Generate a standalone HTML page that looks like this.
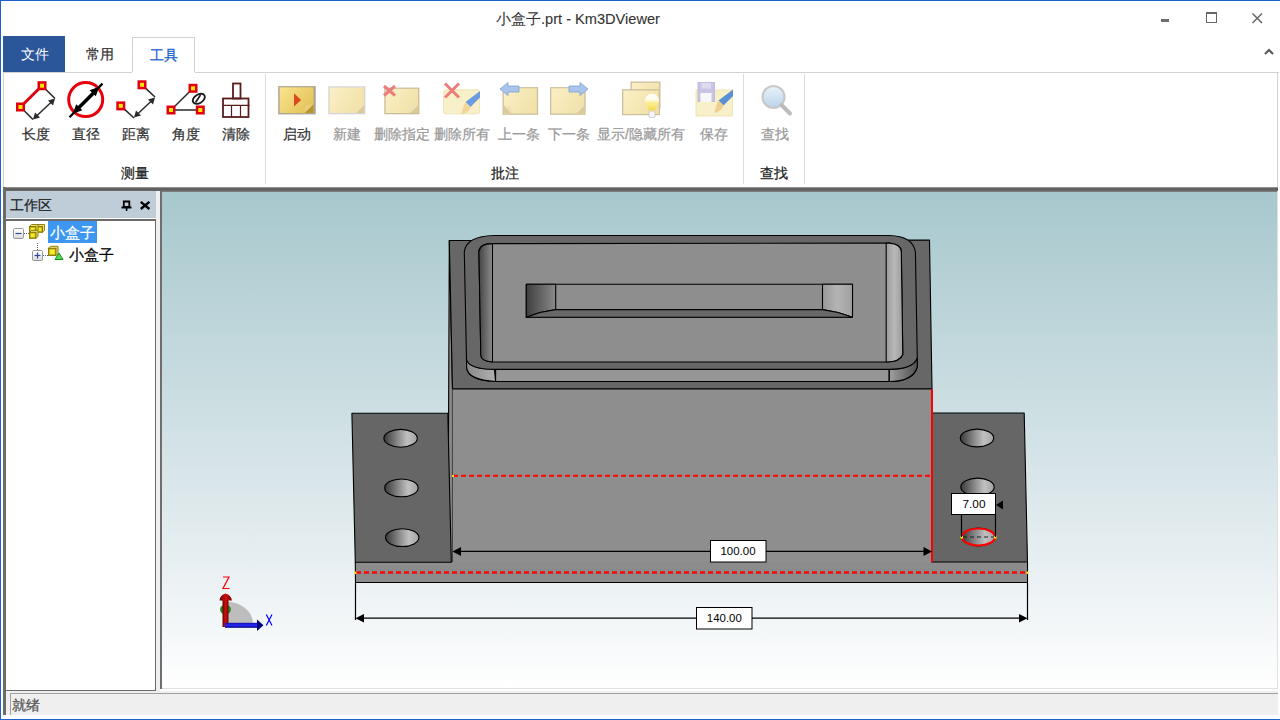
<!DOCTYPE html>
<html><head><meta charset="utf-8">
<style>
*{margin:0;padding:0;box-sizing:border-box}
html,body{width:1280px;height:720px;overflow:hidden;background:#fff;font-family:"Liberation Sans",sans-serif;}
div{-webkit-text-stroke:0.25px currentColor}
.a{position:absolute}
#frame{left:0;top:0;width:1280px;height:720px;border:1px solid #1c5fd0;border-right:none}
.title{left:0;top:10px;width:1156px;text-align:center;font-size:14.6px;color:#333;-webkit-text-stroke:0.1px #333}
.tab{top:37px;height:35px;font-size:14px;line-height:35px;text-align:center}
.lbl{font-size:14px;color:#333;text-align:center;white-space:nowrap}
.dis{color:#9a9a9a}
.grp{font-size:14px;color:#222;text-align:center;top:164.5px}
.sep{width:1px;background:#dcdcdc;top:74px;height:110px}
</style></head>
<body>
<div class="a" id="frame"></div>
<div class="a title">小盒子.prt - Km3DViewer</div>
<!-- window buttons -->
<div class="a" style="left:1161px;top:19px;width:8px;height:3px;background:#6e6e6e"></div>
<div class="a" style="left:1206px;top:12px;width:11px;height:11px;border:1px solid #666;border-top-width:2px"></div>
<svg class="a" style="left:1251px;top:12px" width="13" height="13"><path d="M1.5 1.5L11 11M11 1.5L1.5 11" stroke="#666" stroke-width="1.5"/></svg>
<svg class="a" style="left:1263px;top:48px" width="12" height="8"><path d="M2 6L6 2L10 6" stroke="#555" stroke-width="2" fill="none"/></svg>

<!-- tabs -->
<div class="a tab" style="left:3px;top:36px;height:36px;line-height:38px;width:62px;padding-left:2px;background:#2b579a;color:#fff;-webkit-text-stroke:0;font-size:13.6px">文件</div>
<div class="a tab" style="left:68px;width:64px;color:#333">常用</div>
<div class="a tab" style="left:132px;width:63px;border:1px solid #d2d2d2;border-bottom:none;background:#fff;color:#1a62d0">工具</div>
<div class="a" style="left:3px;top:72px;width:129px;height:1px;background:#d2d2d2"></div>
<div class="a" style="left:3px;top:72px;width:1px;height:115px;background:#d2d2d2"></div>
<div class="a" style="left:195px;top:72px;width:1084px;height:1px;background:#d2d2d2"></div>

<!-- ribbon content -->
<div id="ribbon">
<svg class="a" style="left:0;top:72px" width="820" height="80" viewBox="0 72 820 80">
<defs>
<linearGradient id="note" x1="0" y1="0" x2="1" y2="1"><stop offset="0" stop-color="#f6e7a6"/><stop offset="1" stop-color="#e6cf7a"/></linearGradient>
<linearGradient id="noteA" x1="0" y1="0" x2="1" y2="0.6"><stop offset="0" stop-color="#fbe490"/><stop offset="1" stop-color="#e4c55a"/></linearGradient>
<linearGradient id="bulb" x1="0" y1="0" x2="0" y2="1"><stop offset="0" stop-color="#ffffff"/><stop offset="0.35" stop-color="#fffbe8"/><stop offset="0.55" stop-color="#fbee90"/><stop offset="1" stop-color="#f3dc50"/></linearGradient>
<linearGradient id="noteD" x1="0" y1="0" x2="1" y2="0.5"><stop offset="0" stop-color="#fbf0c6"/><stop offset="1" stop-color="#f2e2aa"/></linearGradient>
<linearGradient id="mag" x1="0" y1="0" x2="0" y2="1"><stop offset="0" stop-color="#eaf3fb"/><stop offset="1" stop-color="#b9d3ea"/></linearGradient>
</defs>
<!-- 长度 -->
<g stroke-linecap="butt">
<line x1="20.5" y1="107" x2="42" y2="85.7" stroke="#e00010" stroke-width="3"/>
<path d="M42,85.7 L55,98.5 M20.5,107 L33,119.5" stroke="#2a2a2a" stroke-width="1.6" fill="none"/>
<line x1="35" y1="117.5" x2="53.5" y2="100" stroke="#2a2a2a" stroke-width="1.5"/>
<polygon points="55,98.5 48,100.5 53,105.5" fill="#2a2a2a"/>
<polygon points="33,119.5 35,112.5 40,117.5" fill="#2a2a2a"/>
<rect x="16" y="102.5" width="9" height="9" fill="#e00010"/><rect x="18.5" y="105" width="4" height="4" fill="#ffe800"/>
<rect x="37.5" y="81.2" width="9" height="9" fill="#e00010"/><rect x="40" y="83.7" width="4" height="4" fill="#ffe800"/>
</g>
<!-- 直径 -->
<circle cx="85.7" cy="99.6" r="17" fill="none" stroke="#e8000c" stroke-width="3"/>
<line x1="69.5" y1="117.3" x2="102.5" y2="83.6" stroke="#000" stroke-width="2.3"/>
<line x1="76" y1="110.5" x2="96" y2="90.5" stroke="#000" stroke-width="3.6"/>
<polygon points="98,88 91,90.5 95.5,95" fill="#000" stroke="#000" stroke-width="1.5"/>
<polygon points="74,112.5 76.5,105.5 81,110" fill="#000" stroke="#000" stroke-width="1.5"/>
<!-- 距离 -->
<path d="M142,84.8 L155,97 M120.8,105.9 L134,118" stroke="#2a2a2a" stroke-width="1.6" fill="none"/>
<line x1="135.5" y1="116" x2="153.5" y2="99" stroke="#2a2a2a" stroke-width="1.5"/>
<polygon points="155,97.5 148,99.5 153,104.5" fill="#2a2a2a"/>
<polygon points="134,117.5 136,110.5 141,115.5" fill="#2a2a2a"/>
<rect x="116.3" y="101.4" width="9" height="9" fill="#e00010"/><rect x="118.8" y="103.9" width="4" height="4" fill="#ffe800"/>
<rect x="137.5" y="80.3" width="9" height="9" fill="#e00010"/><rect x="140" y="82.8" width="4" height="4" fill="#ffe800"/>
<!-- 角度 -->
<path d="M171,110 L193,88.3 M171,110 L200.3,110" stroke="#2a2a2a" stroke-width="1.5" fill="none"/>
<ellipse cx="198.8" cy="98.8" rx="6.6" ry="4.3" transform="rotate(-32 198.8 98.8)" stroke="#1a1a1a" stroke-width="1.8" fill="none"/>
<path d="M195.5,102.5 L200.5,95" stroke="#1a1a1a" stroke-width="1.6"/>
<rect x="166.5" y="105.5" width="9" height="9" fill="#e00010"/><rect x="169" y="108" width="4" height="4" fill="#ffe800"/>
<rect x="188.5" y="83.8" width="9" height="9" fill="#e00010"/><rect x="191" y="86.3" width="4" height="4" fill="#ffe800"/>
<rect x="195.8" y="105.5" width="9" height="9" fill="#e00010"/><rect x="198.3" y="108" width="4" height="4" fill="#ffe800"/>
<!-- 清除 -->
<g fill="none" stroke="#5a1c1c" stroke-width="1.8">
<rect x="233" y="83.5" width="7.5" height="15"/>
<rect x="223" y="98.5" width="25.5" height="18.5"/>
<path d="M223,105.3 H249.5 M231.5,105.3 V117 M240.5,105.3 V117" stroke-width="1.2"/>
</g>
<!-- 启动 -->
<rect x="278.2" y="86.1" width="37.5" height="28.3" fill="#a8a294"/>
<rect x="279.6" y="87.3" width="34" height="25.8" fill="url(#noteA)"/>
<polygon points="313.6,104 313.6,113.1 304.5,113.1" fill="#b8962e"/>
<polygon points="304.5,113.1 313.6,104 306,105.5" fill="#e6cf82"/>
<polygon points="294,93.3 301.2,100 294,106.6" fill="#dc4a22"/>
<!-- 新建 -->
<rect x="328.3" y="86.3" width="37.1" height="28.0" fill="#d4d2d6"/>
<rect x="329.6" y="87.5" width="34.5" height="25.5" fill="url(#noteD)"/>
<polygon points="364.1,105.0 364.1,113.0 356.1,113.0" fill="#dccb94"/><polygon points="356.1,113.0 364.1,105.0 357.1,106.0" fill="#efe2b8"/>
<!-- 删除指定 -->
<rect x="384.3" y="87.6" width="35.1" height="26.7" fill="#c9bc9a"/>
<rect x="385.6" y="88.8" width="32.5" height="24.2" fill="url(#noteD)"/>
<polygon points="418.1,105.0 418.1,113.0 410.1,113.0" fill="#dccb94"/><polygon points="410.1,113.0 418.1,105.0 411.1,106.0" fill="#efe2b8"/>
<path d="M384,86 L395,95.5 M395,86 L384,95.5" stroke="#ec7d7d" stroke-width="3"/>
<!-- 删除所有 -->
<rect x="443.6" y="89.8" width="36" height="24" rx="2" fill="#f8f0c8" stroke="#ebdfa8" stroke-width="0.8"/>
<path d="M445,83.5 L459,97.5 M459,83.5 L445,97.5" stroke="#ea7e7e" stroke-width="3"/>
<path d="M480,91 L480,97.5 L470.5,107 L465.5,102 Z" fill="#6b9be0"/>
<path d="M465.5,102 L470.5,107 Q469,112.5 461.5,114.5 Q463,106.5 465.5,102 Z" fill="#f3d49a"/>
<!-- 上一条 -->
<rect x="502.5" y="87.1" width="35.6" height="27.7" fill="#cdbf9c"/>
<rect x="503.8" y="88.3" width="33" height="25.2" fill="url(#noteD)"/>
<polygon points="503.8,105.5 503.8,113.5 511.8,113.5" fill="#dccb94"/><polygon points="511.8,113.5 503.8,105.5 510.8,106.5" fill="#efe2b8"/>
<path d="M500,89 L508,82.5 L508,86 L519,86 L519,92 L508,92 L508,95.5 Z" fill="#a9c5ec" stroke="#7ea0d4" stroke-width="0.8"/>
<!-- 下一条 -->
<rect x="550.0" y="87.1" width="35.6" height="27.7" fill="#cdbf9c"/>
<rect x="551.3" y="88.3" width="33" height="25.2" fill="url(#noteD)"/>
<polygon points="584.3,105.5 584.3,113.5 576.3,113.5" fill="#dccb94"/><polygon points="576.3,113.5 584.3,105.5 577.3,106.5" fill="#efe2b8"/>
<path d="M588,89 L580,82.5 L580,86 L569,86 L569,92 L580,92 L580,95.5 Z" fill="#a9c5ec" stroke="#7ea0d4" stroke-width="0.8"/>
<!-- 显示/隐藏所有 -->
<rect x="630.5" y="81.5" width="30" height="27" fill="#cdbf9c"/>
<rect x="631.8" y="82.8" width="27.4" height="24.5" fill="url(#noteD)"/>
<rect x="622" y="89.2" width="38" height="26" fill="#cdbf9c"/>
<rect x="623.3" y="90.5" width="35.4" height="23.5" fill="url(#noteD)"/>
<rect x="649" y="111" width="6" height="6.5" rx="1" fill="#f4f4f4" stroke="#b8b8b8" stroke-width="0.6"/>
<path d="M644.8,101 A7.2,7.2 0 1 1 659.2,101 Q658.5,105 656,107.5 L655.5,110.5 H648.5 L648,107.5 Q645.5,105 644.8,101 Z" fill="url(#bulb)"/>
<!-- 保存 -->
<rect x="696" y="90" width="36.5" height="26" fill="#f8f0c8" stroke="#ebdfa8" stroke-width="0.8"/>
<rect x="698" y="82.5" width="16.5" height="19" fill="#c9c4e4" stroke="#b8b2dc" stroke-width="0.8"/>
<rect x="701.5" y="83" width="9.5" height="5.5" fill="#dedbee"/>
<rect x="700.5" y="93" width="11" height="9" fill="#f8f8fa"/>
<path d="M733,89.5 L733,96 L723.5,105.5 L718.5,100.5 Z" fill="#5b8fd6"/>
<path d="M718.5,100.5 L723.5,105.5 Q722,111 714.5,113 Q716,105 718.5,100.5 Z" fill="#f0cf8e"/>
<!-- 查找 -->
<circle cx="773.5" cy="97" r="11" fill="url(#mag)" stroke="#c8c8c8" stroke-width="2.2"/>
<line x1="781.5" y1="105" x2="790" y2="113.5" stroke="#bcbcbc" stroke-width="4" stroke-linecap="round"/>
</svg>
<div class="a lbl" style="left:11px;top:126px;width:50px">长度</div>
<div class="a lbl" style="left:61px;top:126px;width:50px">直径</div>
<div class="a lbl" style="left:111px;top:126px;width:50px">距离</div>
<div class="a lbl" style="left:161px;top:126px;width:50px">角度</div>
<div class="a lbl" style="left:211px;top:126px;width:50px">清除</div>
<div class="a lbl" style="left:272px;top:126px;width:50px">启动</div>
<div class="a lbl dis" style="left:322px;top:126px;width:50px">新建</div>
<div class="a lbl dis" style="left:372px;top:126px;width:60px">删除指定</div>
<div class="a lbl dis" style="left:432px;top:126px;width:60px">删除所有</div>
<div class="a lbl dis" style="left:494px;top:126px;width:50px">上一条</div>
<div class="a lbl dis" style="left:544px;top:126px;width:50px">下一条</div>
<div class="a lbl dis" style="left:596px;top:126px;width:90px">显示/隐藏所有</div>
<div class="a lbl dis" style="left:689px;top:126px;width:50px">保存</div>
<div class="a lbl dis" style="left:750px;top:126px;width:50px">查找</div>
<div class="a grp" style="left:110px;width:50px">测量</div>
<div class="a grp" style="left:480px;width:50px">批注</div>
<div class="a grp" style="left:749px;width:50px">查找</div>
<div class="a sep" style="left:265px"></div>
<div class="a sep" style="left:743px"></div>
<div class="a sep" style="left:804px"></div>
</div>

<!-- dark bar -->
<div class="a" style="left:3px;top:187px;width:1275px;height:5px;background:linear-gradient(#a8a8a8,#626262 30%,#5e5e5e 55%,#707070 80%,#8a8a8a)"></div>
<div class="a" style="left:1277px;top:72px;width:1px;height:115px;background:#d2d2d2"></div>
<div class="a" style="left:3px;top:187px;width:3px;height:528px;background:#6b6b6b"></div>

<!-- left panel -->
<div class="a" style="left:6px;top:191px;width:150px;height:500px;background:#6b6b6b"></div>
<div class="a" style="left:6px;top:191px;width:150px;height:27px;background:#bfcdd9"></div>
<div class="a" style="left:6px;top:218px;width:150px;height:1px;background:#fff"></div>
<div class="a" style="left:6px;top:221px;width:149px;height:469px;background:#fff"></div>
<div class="a" style="left:10px;top:197px;font-size:14px;color:#222">工作区</div>
<div class="a" style="left:156px;top:191px;width:4px;height:500px;background:#efefef"></div>
<div class="a" style="left:160px;top:191px;width:2px;height:498px;background:#6e6e6e"></div>

<!-- TREE -->
<svg class="a" style="left:0;top:190px" width="160" height="80" viewBox="0 190 160 80">
<defs>
<linearGradient id="tb" x1="0" y1="0" x2="0" y2="1"><stop offset="0" stop-color="#fff"/><stop offset="0.5" stop-color="#f2f2f2"/><stop offset="1" stop-color="#d6d6d6"/></linearGradient>
</defs>
<!-- pin -->
<path d="M123.8,201.5 H129.3 V207 H123.8 Z" fill="none" stroke="#000" stroke-width="1.8"/>
<rect x="121.5" y="206.5" width="10" height="2" fill="#000"/>
<rect x="125.8" y="208" width="1.6" height="3" fill="#000"/>
<path d="M140.8,201.8 L149.4,209 M149.4,201.8 L140.8,209" stroke="#000" stroke-width="2.4"/>
<!-- minus box -->
<rect x="13.5" y="228.5" width="10" height="10" rx="1.2" fill="url(#tb)" stroke="#9a9a9a" stroke-width="1"/>
<line x1="15.5" y1="233.5" x2="21.5" y2="233.5" stroke="#2b4a9a" stroke-width="1.2"/>
<line x1="24" y1="233.5" x2="29" y2="233.5" stroke="#666" stroke-width="1" stroke-dasharray="1,1"/>
<line x1="37.5" y1="243" x2="37.5" y2="250" stroke="#666" stroke-width="1" stroke-dasharray="1,1"/>
<!-- cubes icon -->
<g><path d="M36,226.5 L38,224.5 H44.5 V230.3 L42.5,232.3 Z" fill="#e9e07a" stroke="#857400" stroke-width="0.9"/><rect x="36" y="226.5" width="6.5" height="5.8" fill="#b8a800" stroke="#857400" stroke-width="0.9"/><rect x="37.2" y="227.7" width="4.1" height="3.4" fill="#f5ec30"/><path d="M29.5,226.5 L31.5,224.5 H38.0 V230.3 L36.0,232.3 Z" fill="#e9e07a" stroke="#857400" stroke-width="0.9"/><rect x="29.5" y="226.5" width="6.5" height="5.8" fill="#b8a800" stroke="#857400" stroke-width="0.9"/><rect x="30.7" y="227.7" width="4.1" height="3.4" fill="#f5ec30"/><path d="M29.5,232.3 L31.5,230.3 H38.0 V236.3 L36.0,238.3 Z" fill="#e9e07a" stroke="#857400" stroke-width="0.9"/><rect x="29.5" y="232.3" width="6.5" height="6" fill="#b8a800" stroke="#857400" stroke-width="0.9"/><rect x="30.7" y="233.5" width="4.1" height="3.6" fill="#f5ec30"/></g>
<!-- plus box -->
<rect x="32.5" y="250.5" width="10" height="10" rx="1.2" fill="url(#tb)" stroke="#9a9a9a" stroke-width="1"/>
<line x1="34.5" y1="255.5" x2="40.5" y2="255.5" stroke="#2b4a9a" stroke-width="1.2"/>
<line x1="37.5" y1="252.5" x2="37.5" y2="258.5" stroke="#2b4a9a" stroke-width="1.2"/>
<line x1="43" y1="255.5" x2="48" y2="255.5" stroke="#666" stroke-width="1" stroke-dasharray="1,1"/>
<g><path d="M48.5,248.3 L50.5,246.3 H58.0 V253.5 L56.0,255.5 Z" fill="#e9e07a" stroke="#857400" stroke-width="0.9"/><rect x="48.5" y="248.3" width="7.5" height="7.2" fill="#b8a800" stroke="#857400" stroke-width="0.9"/><rect x="49.7" y="249.5" width="5.1" height="4.800000000000001" fill="#f5ec30"/></g>
<polygon points="59,253 63,259.5 55,259.5" fill="#4ee04e" stroke="#1a8a1a" stroke-width="1"/>
</svg>
<div class="a" style="left:48px;top:221px;width:49px;height:22px;background:#3d96ef"></div>
<div class="a" style="left:49.5px;top:223px;font-size:15px;line-height:20px;color:#fff">小盒子</div>
<div class="a" style="left:69px;top:245px;font-size:15px;line-height:20px;color:#000">小盒子</div>
<!-- /TREE -->
<!-- viewer -->
<div class="a" style="left:162px;top:192px;width:1115px;height:496px;background:linear-gradient(#a7c8cd,#e8eff2 75%,#fff)"></div>
<div class="a" style="left:162px;top:688px;width:1116px;height:1px;background:#e0e0e0"></div>
<div class="a" style="left:1277px;top:191px;width:1px;height:498px;background:#e0e0e0"></div>

<!-- MODEL -->
<svg class="a" style="left:0;top:0" width="1280" height="720" viewBox="0 0 1280 720">
<defs>
<linearGradient id="hole" x1="0" x2="1" y1="0" y2="0"><stop offset="0" stop-color="#3a3a3a"/><stop offset="0.7" stop-color="#c0c0c0"/><stop offset="1" stop-color="#a4a4a4"/></linearGradient>
<linearGradient id="wallL" x1="0" x2="1"><stop offset="0" stop-color="#3e3e3e"/><stop offset="1" stop-color="#8a8a8a"/></linearGradient>
<linearGradient id="wallR" x1="0" x2="1"><stop offset="0" stop-color="#999"/><stop offset="0.5" stop-color="#b4b4b4"/><stop offset="1" stop-color="#a0a0a0"/></linearGradient>
<linearGradient id="rimL" x1="0" x2="1"><stop offset="0" stop-color="#8a8a8a"/><stop offset="1" stop-color="#b0b0b0"/></linearGradient>
<linearGradient id="rimR" x1="0" x2="1"><stop offset="0" stop-color="#a0a0a0"/><stop offset="1" stop-color="#505050"/></linearGradient>
<linearGradient id="ringWL" x1="0" x2="1"><stop offset="0" stop-color="#444"/><stop offset="1" stop-color="#8c8c8c"/></linearGradient>
<linearGradient id="ringWR" x1="0" x2="1"><stop offset="0" stop-color="#9a9a9a"/><stop offset="0.5" stop-color="#b8b8b8"/><stop offset="1" stop-color="#9a9a9a"/></linearGradient>
<linearGradient id="arrR" x1="0" x2="1"><stop offset="0" stop-color="#600"/><stop offset="0.5" stop-color="#d01010"/><stop offset="1" stop-color="#700"/></linearGradient>
<linearGradient id="arrB" x1="0" x2="0" y1="0" y2="1"><stop offset="0" stop-color="#1010a0"/><stop offset="0.5" stop-color="#2a2aff"/><stop offset="1" stop-color="#000080"/></linearGradient>
</defs>
<g stroke="#000" stroke-width="1.1" stroke-linejoin="round">
<!-- left wedge strip of body -->
<polygon points="449.3,240.5 452.5,389 452.5,562 448,562" fill="#8a8a8a"/>
<!-- upper block top face -->
<polygon points="449.3,240.5 929.5,240 932,389 452.5,389" fill="#676767"/>
<!-- rim side face (front) -->
<path d="M466.5,359 Q470,369.4 494.4,369.4 L889.2,369.4 Q913,369 917.3,358 L917.3,367 Q913,381.5 889.2,381.5 L494.4,381.5 Q468,380 466.7,367.9 Z" fill="#969696"/>
<path d="M466.5,359 Q470,369.4 494.4,369.4 L495.6,381.5 Q468,380 466.7,367.9 Z" fill="url(#rimL)"/>
<path d="M889.2,369.4 Q913,369 917.3,358 L917.3,367 Q913,381.5 889.2,381.5 Z" fill="url(#rimR)"/>
<!-- ring top outer boundary -->
<path d="M464.3,252 Q466,236 494.4,235.5 L889,235.5 Q913,236 915.4,252 L917.3,358 Q913,369.4 889.2,369.4 L494.4,369.4 Q468,369 466.5,359 Z" fill="#676767"/>
<!-- inner recess -->
<path d="M478.9,251.4 Q480,243.6 492.5,243.6 L889.2,243.1 Q901,244 901.3,251.4 L902.8,354.3 Q900,362 886.2,362 L492.5,362 Q481,361 480.8,355.3 Z" fill="#8e8e8e"/>
<path d="M478.9,251.4 Q480,243.6 492.5,243.6 L492.5,362 Q481,361 480.8,355.3 Z" fill="url(#ringWL)"/>
<path d="M886.2,243.1 L889.2,243.1 Q901,244 901.3,251.4 L902.8,354.3 Q900,362 886.2,362 Z" fill="url(#ringWR)"/>
<line x1="495.6" y1="369.4" x2="495.6" y2="381.5"/>
<line x1="889.2" y1="369.4" x2="889.2" y2="381.5"/>
<!-- slot -->
<rect x="526.3" y="284.3" width="326.2" height="33" fill="#8e8e8e"/>
<polygon points="526.3,284.3 555.7,284.3 555.7,309.6 540,312.5 526.3,317.3" fill="url(#wallL)"/>
<polygon points="822.5,284.3 852.5,284.3 852.5,317.3 838,312.5 822.5,309.6" fill="url(#wallR)"/>
<polygon points="526.3,317.3 540,312.5 555.7,309.6 822.5,309.6 838,312.5 852.5,317.3" fill="#686868"/>
<!-- main lower front face -->
<polygon points="452.5,389 932,389 932,563 452.5,563" fill="#8e8e8e" stroke="none"/>
<line x1="452.5" y1="389" x2="932" y2="389"/>
<!-- base strip -->
<polygon points="355.3,562 1027.5,562 1027.5,582.5 355.5,582.5" fill="#8c8c8c" stroke="none"/>
<path d="M355.3,562 L355.5,582.5 L1027.5,582.5 L1027.5,562" fill="none"/>
<!-- flanges -->
<polygon points="351.9,413.3 447.8,413.3 451.3,562.2 355.3,562.2" fill="#666"/>
<polygon points="932.5,413 1024.2,413 1027.5,562 931.7,562" fill="#666"/>
<!-- holes -->
<ellipse cx="400.6" cy="438.3" rx="16.7" ry="8.9" fill="url(#hole)"/>
<ellipse cx="401.4" cy="487.9" rx="16.7" ry="8.9" fill="url(#hole)"/>
<ellipse cx="402.2" cy="537.6" rx="16.7" ry="8.9" fill="url(#hole)"/>
<ellipse cx="977" cy="438" rx="16.7" ry="8.9" fill="url(#hole)"/>
<ellipse cx="977.5" cy="487" rx="16.7" ry="8.9" fill="url(#hole)"/>
<ellipse cx="978.3" cy="537" rx="16.7" ry="8.9" fill="url(#hole)"/>
</g>
<!-- red features -->
<line x1="932" y1="389" x2="932" y2="562" stroke="#ff0000" stroke-width="2"/>
<line x1="453" y1="475.7" x2="931" y2="475.7" stroke="#ff0000" stroke-width="2" stroke-dasharray="5,3"/>
<line x1="356" y1="572.5" x2="1027" y2="572.5" stroke="#ff0000" stroke-width="2.5" stroke-dasharray="5,3"/>
<ellipse cx="978.5" cy="537" rx="16.5" ry="8.5" fill="none" stroke="#ff0000" stroke-width="2.2"/>
<line x1="963" y1="537" x2="994" y2="537" stroke="#222" stroke-width="1" stroke-dasharray="4,3"/>
<g fill="#ffee00"><rect x="960.5" y="536" width="2.5" height="2.5"/><rect x="994" y="536" width="2.5" height="2.5"/><rect x="1026.5" y="571.5" width="2" height="2.5"/><rect x="354.5" y="571.5" width="2" height="2.5"/><rect x="452" y="475" width="2" height="2"/></g>
<!-- dimensions -->
<g stroke="#000" stroke-width="1.2" fill="#000">
<line x1="460" y1="551.4" x2="924" y2="551.4"/>
<polygon points="452.5,551.4 461,547 461,556" stroke="none"/>
<polygon points="932,551.4 923.5,547 923.5,556" stroke="none"/>
<line x1="355.5" y1="583" x2="355.5" y2="620"/>
<line x1="1027.5" y1="583" x2="1027.5" y2="620"/>
<line x1="363" y1="618.2" x2="1020" y2="618.2"/>
<polygon points="355.5,618.2 364,614 364,622.5" stroke="none"/>
<polygon points="1027.5,618.2 1019,614 1019,622.5" stroke="none"/>
<line x1="961.5" y1="514.7" x2="961.5" y2="537"/>
<line x1="995.5" y1="514.7" x2="995.5" y2="537"/>
<polygon points="996,505 1003,500.5 1003,509.5" stroke="none"/>
</g>
<g fill="#fff" stroke="#000" stroke-width="1">
<rect x="710.5" y="540.5" width="55.5" height="21.5"/>
<rect x="696.5" y="607.5" width="55.5" height="21.5"/>
<rect x="951.5" y="493.5" width="44" height="21"/>
</g>
<g font-family="Liberation Sans" font-size="11" fill="#000">
<text x="720.5" y="555" textLength="35" lengthAdjust="spacingAndGlyphs">100.00</text>
<text x="706.8" y="621.5" textLength="35" lengthAdjust="spacingAndGlyphs">140.00</text>
<text x="962.5" y="508" textLength="23" lengthAdjust="spacingAndGlyphs">7.00</text>
</g>
<!-- axis triad -->
<path d="M226,623.5 L226,601.5 A27,22 0 0 1 253,623.5 Z" fill="#bdbdbd"/>
<ellipse cx="225.5" cy="609.5" rx="5.5" ry="4.8" fill="#1f8f1f"/>
<rect x="222.5" y="598" width="6" height="29" fill="url(#arrR)"/>
<path d="M219.5,600.5 Q220,595 225.5,593.5 Q231,595 232,600.5 Z" fill="url(#arrR)"/>
<rect x="225" y="622.8" width="32.5" height="5" fill="url(#arrB)"/>
<polygon points="257,619.5 263.5,625.3 257,631" fill="#000080"/>
<path d="M223,577 H229 L223,588.5 H229.5" fill="none" stroke="#ff0000" stroke-width="1.2"/>
<path d="M266.3,614.5 L272,625.5 M272,614.5 L266.3,625.5" fill="none" stroke="#0000ff" stroke-width="1.2"/>
</svg>
<!-- /MODEL -->
<!-- status bar -->
<div class="a" style="left:6px;top:691px;width:1272px;height:24px;background:#efefef"></div>
<div class="a" style="left:10px;top:693px;width:1268px;height:1px;background:#a0a0a0"></div>
<div class="a" style="left:10px;top:693px;width:1px;height:22px;background:#a0a0a0"></div>
<div class="a" style="left:12px;top:697px;font-size:14px;color:#555">就绪</div>
</body></html>
